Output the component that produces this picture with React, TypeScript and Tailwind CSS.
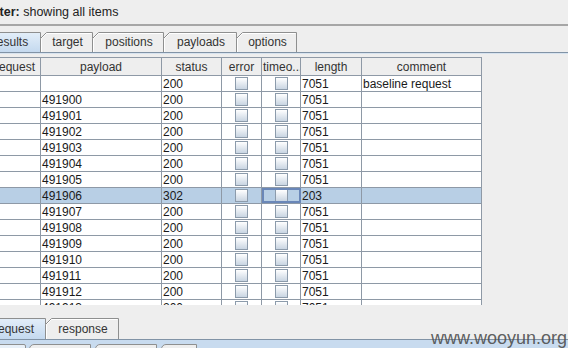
import React from "react";

type TabProps = {
  w: number;
  cls: string;
  label: string;
  selected?: boolean;
  h: number;
};

function Tab({ w, cls, label, selected, h }: TabProps) {
  const id = `g${label}`;
  return (
    <div className={`relative shrink-0 h-full ${cls} -mr-[1px]`}>
      <svg className="absolute inset-0" width={w} height={h}>
        <defs>
          <linearGradient id={id} x1="0" y1="0" x2="0" y2="1">
            <stop offset="0" stopColor="#e3eef9" />
            <stop offset="1" stopColor="#c4d9ef" />
          </linearGradient>
        </defs>
        <path
          d={`M0.5,${h} L0.5,6.5 L6.5,0.5 L${w - 0.5},0.5 L${w - 0.5},${h}`}
          fill={selected ? `url(#${id})` : "#eeeeee"}
          stroke="#8e8f8f"
        />
        {selected ? null : (
          <path d={`M1.5,${h} L1.5,6.5 L6.5,1.5 L${w - 1.5},1.5`} fill="none" stroke="#ffffff" />
        )}
      </svg>
      <div className="relative flex h-full items-center justify-center pl-[2px] text-[12px] text-[#333333]">
        {label}
      </div>
    </div>
  );
}

function Check() {
  return (
    <div className="h-[13px] w-[13px] border border-[#8c9bab] bg-gradient-to-b from-[#ffffff] to-[#c9d5e2]" />
  );
}

const rows: { p: string; s: string; l: string; c: string }[] = [
  { p: "", s: "200", l: "7051", c: "baseline request" },
  { p: "491900", s: "200", l: "7051", c: "" },
  { p: "491901", s: "200", l: "7051", c: "" },
  { p: "491902", s: "200", l: "7051", c: "" },
  { p: "491903", s: "200", l: "7051", c: "" },
  { p: "491904", s: "200", l: "7051", c: "" },
  { p: "491905", s: "200", l: "7051", c: "" },
  { p: "491906", s: "302", l: "203", c: "" },
  { p: "491907", s: "200", l: "7051", c: "" },
  { p: "491908", s: "200", l: "7051", c: "" },
  { p: "491909", s: "200", l: "7051", c: "" },
  { p: "491910", s: "200", l: "7051", c: "" },
  { p: "491911", s: "200", l: "7051", c: "" },
  { p: "491912", s: "200", l: "7051", c: "" },
  { p: "491913", s: "200", l: "7051", c: "" },
];

const cell = "shrink-0 h-full border-r border-[#8e99a6] flex items-center";

export default function App() {
  return (
    <div className="relative flex h-[348px] w-[568px] flex-col overflow-hidden bg-[#eeeeee] font-['Liberation_Sans',Arial,sans-serif] text-[12px] text-[#1a1a1a]">
      {/* filter bar */}
      <div className="flex h-[24px] shrink-0 items-center">
        <span className="-ml-[15px] whitespace-nowrap text-[12.5px] text-[#222222]">
          <b>Filter:</b> showing all items
        </span>
      </div>
      <div className="h-[2px] shrink-0 bg-[#a6a6a6]" />
      <div className="h-[6px] shrink-0" />
      {/* top tabs */}
      <div className="flex h-[20px] shrink-0 -ml-[22px]">
        <Tab w={63} cls="w-[63px]" h={20} label="results" selected />
        <Tab w={53} cls="w-[53px]" h={20} label="target" />
        <Tab w={72} cls="w-[72px]" h={20} label="positions" />
        <Tab w={74} cls="w-[74px]" h={20} label="payloads" />
        <Tab w={61} cls="w-[61px]" h={20} label="options" />
      </div>
      <div className="h-[1px] shrink-0 bg-[#8193a6]" />
      <div className="h-[4px] shrink-0 border-t border-[#d7e3ef]" />
      {/* table */}
      <div className="flex h-[248px] shrink-0 flex-col overflow-hidden">
        <div className="flex h-[19px] shrink-0 -ml-[10px] w-[492px] border-y border-[#8e99a6] bg-[#eeeeee] text-[#333333]">
          <div className={`${cell} w-[51px] justify-center`}>request</div>
          <div className={`${cell} w-[121px] justify-center`}>payload</div>
          <div className={`${cell} w-[60px] justify-center`}>status</div>
          <div className={`${cell} w-[40px] justify-center`}>error</div>
          <div className={`${cell} w-[39px] justify-start pl-[1px] overflow-hidden whitespace-nowrap`}>timeo...</div>
          <div className={`${cell} w-[61px] justify-center`}>length</div>
          <div className={`${cell} w-[120px] justify-center`}>comment</div>
        </div>
        {rows.map((r, i) => {
          const sel = r.p === "491906";
          return (
            <div
              key={i}
              className={`flex h-[16px] shrink-0 -ml-[10px] w-[492px] border-b border-[#8e99a6] ${sel ? "bg-[#b8cfe5]" : "bg-white"}`}
            >
              <div className={`${cell} w-[51px]`} />
              <div className={`${cell} w-[121px] pl-[1px]`}>{r.p}</div>
              <div className={`${cell} w-[60px] pl-[1px]`}>{r.s}</div>
              <div className={`${cell} w-[40px] justify-center`}>
                <Check />
              </div>
              <div
                className={`${cell} w-[39px] justify-center ${sel ? "outline outline-2 -outline-offset-2 outline-[#6a87b8]" : ""}`}
              >
                <Check />
              </div>
              <div className={`${cell} w-[61px] pl-[1px]`}>{r.l}</div>
              <div className={`${cell} w-[120px] pl-[1px] whitespace-nowrap`}>{r.c}</div>
            </div>
          );
        })}
      </div>
      <div className="h-[3px] shrink-0" />
      {/* split divider */}
      <div className="h-[4px] shrink-0 bg-[radial-gradient(circle,#b4b4b4_0.6px,transparent_0.7px)] bg-[length:2px_2px]" />
      <div className="h-[6px] shrink-0" />
      {/* bottom tabs */}
      <div className="flex h-[21px] shrink-0 -ml-[20px]">
        <Tab w={66} cls="w-[66px]" h={21} label="request" selected />
        <Tab w={74} cls="w-[74px]" h={21} label="response" />
      </div>
      <div className="h-[1px] shrink-0 bg-[#8193a6]" />
      <div className="flex flex-1 flex-col bg-[#c8dbef] pt-[4px]">
        <div className="flex h-[14px] -ml-[6px]">
          <div className="mr-[3px] h-full w-[32px] rounded-t-[2px] border border-[#8e8f8f] bg-[#e8f0f8]" />
          <div className="mr-[4px] h-full w-[62px] rounded-tl-[5px] border border-[#8e8f8f] bg-[#eeeeee]" />
          <div className="mr-[4px] h-full w-[62px] rounded-tl-[5px] border border-[#8e8f8f] bg-[#eeeeee]" />
          <div className="h-full w-[36px] rounded-tl-[5px] border border-[#8e8f8f] bg-[#eeeeee]" />
        </div>
      </div>
      {/* watermark */}
      <div className="absolute left-[431px] top-[328px] text-[18px] leading-[20px] text-[#4d4d4d]/90">
        www.wooyun.org
      </div>
    </div>
  );
}
